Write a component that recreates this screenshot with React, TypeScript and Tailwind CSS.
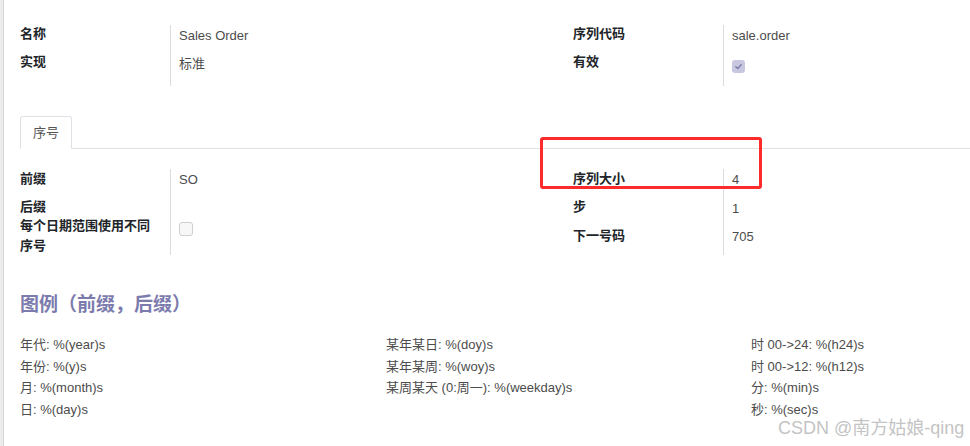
import React from "react";

const font = { fontFamily: '"Liberation Sans", "Noto Sans CJK SC", Arial, sans-serif' };

function Checked() {
  return (
    <div className="w-[13px] h-[13px] rounded-[3px] bg-[#c8c7df] flex items-center justify-center">
      <svg width="9" height="9" viewBox="0 0 10 10">
        <path d="M2 5.2 L4.2 7.2 L8 3" stroke="#7f7eb0" strokeWidth="1.6" fill="none" strokeLinecap="round" strokeLinejoin="round" />
      </svg>
    </div>
  );
}

function Unchecked() {
  return <div className="w-[14px] h-[14px] rounded-[3px] bg-[#f7f7f7] border border-[#cfcfcf]" />;
}

const L = "text-[13px] font-bold text-[#212529]";
const V = "text-[13px] text-[#4c4c4c]";

export default function App() {
  return (
    <div className="relative flex w-[970px] h-[446px] overflow-hidden bg-white" style={font}>
      <div className="w-[3px] h-full bg-[#ececec] border-r border-[#d4d4d4] box-content" />
      <div className="flex-1 pl-4 flex flex-col">
        {/* Top group */}
        <div className="flex mt-[25px]">
          <div className="w-[150px] flex flex-col">
            <div className={`${L} h-[28px] leading-[18px]`}>名称</div>
            <div className={`${L} h-[28px] leading-[18px]`}>实现</div>
          </div>
          <div className="w-[403px] border-l border-[#dcdcdc] pl-2 pt-[1px] flex flex-col">
            <div className={`${V} h-[28px] leading-[20px]`}>Sales Order</div>
            <div className={`${V} h-[28px] leading-[20px]`}>标准</div>
          </div>
          <div className="w-[150px] flex flex-col">
            <div className={`${L} h-[28px] leading-[18px]`}>序列代码</div>
            <div className={`${L} h-[28px] leading-[18px]`}>有效</div>
          </div>
          <div className="flex-1 border-l border-[#dcdcdc] pl-2 pt-[1px] flex flex-col h-[61px]">
            <div className={`${V} h-[28px] leading-[20px]`}>sale.order</div>
            <div className="h-[28px] pt-[6px]">
              <Checked />
            </div>
          </div>
        </div>

        {/* Tabs */}
        <div className="flex mt-[30px] border-b border-[#dee2e6] h-[33px]">
          <div className="w-[52px] h-[33px] border border-[#dee2e6] border-b-white rounded-t-[3px] bg-white flex items-center justify-center text-[13px] text-[#555]">
            序号
          </div>
        </div>

        {/* Second group */}
        <div className="flex mt-[20px]">
          <div className="w-[150px] flex flex-col">
            <div className={`${L} h-[28px] leading-[20px]`}>前缀</div>
            <div className={`${L} h-[19px] leading-[20px]`}>后缀</div>
            <div className={`${L} leading-[20px]`}>
              每个日期范围使用不同
              <br />
              序号
            </div>
          </div>
          <div className="w-[403px] border-l border-[#dcdcdc] pl-2 flex flex-col h-[86px]">
            <div className={`${V} h-[28px] leading-[22px]`}>SO</div>
            <div className="h-[19px]" />
            <div className="pt-[6px]">
              <Unchecked />
            </div>
          </div>
          <div className="w-[150px] flex flex-col">
            <div className={`${L} h-[28px] leading-[19px]`}>序列大小</div>
            <div className={`${L} h-[28px] leading-[20px]`}>步</div>
            <div className={`${L} h-[30px] leading-[22px]`}>下一号码</div>
          </div>
          <div className="flex-1 border-l border-[#dcdcdc] pl-2 flex flex-col h-[86px]">
            <div className={`${V} h-[28px] leading-[22px]`}>4</div>
            <div className={`${V} h-[28px] leading-[24px]`}>1</div>
            <div className={`${V} h-[30px] leading-[24px]`}>705</div>
          </div>
        </div>

        {/* Legend */}
        <div className="mt-[36px] text-[19px] font-bold leading-[26px] text-[#7c7bad]">图例（前缀，后缀）</div>
        <div className="mt-[16px] grid grid-cols-[366px_365px_1fr] text-[13px] leading-[21.7px] text-[#4c4c4c]">
          <div className="flex flex-col">
            <div>年代: %(year)s</div>
            <div>年份: %(y)s</div>
            <div>月: %(month)s</div>
            <div>日: %(day)s</div>
          </div>
          <div className="flex flex-col">
            <div>某年某日: %(doy)s</div>
            <div>某年某周: %(woy)s</div>
            <div>某周某天 (0:周一): %(weekday)s</div>
          </div>
          <div className="flex flex-col">
            <div>时 00-&gt;24: %(h24)s</div>
            <div>时 00-&gt;12: %(h12)s</div>
            <div>分: %(min)s</div>
            <div>秒: %(sec)s</div>
          </div>
        </div>
      </div>

      {/* Annotation box */}
      <div className="absolute left-[540px] top-[137px] w-[222px] h-[52px] border-[3px] border-[#ff2a2a] rounded-[3px]" />
      {/* Watermark */}
      <div className="absolute left-[778px] top-[417px] text-[18px] leading-[22px] text-[#c4c4c4] whitespace-nowrap">
        CSDN @南方姑娘-qing
      </div>
    </div>
  );
}
